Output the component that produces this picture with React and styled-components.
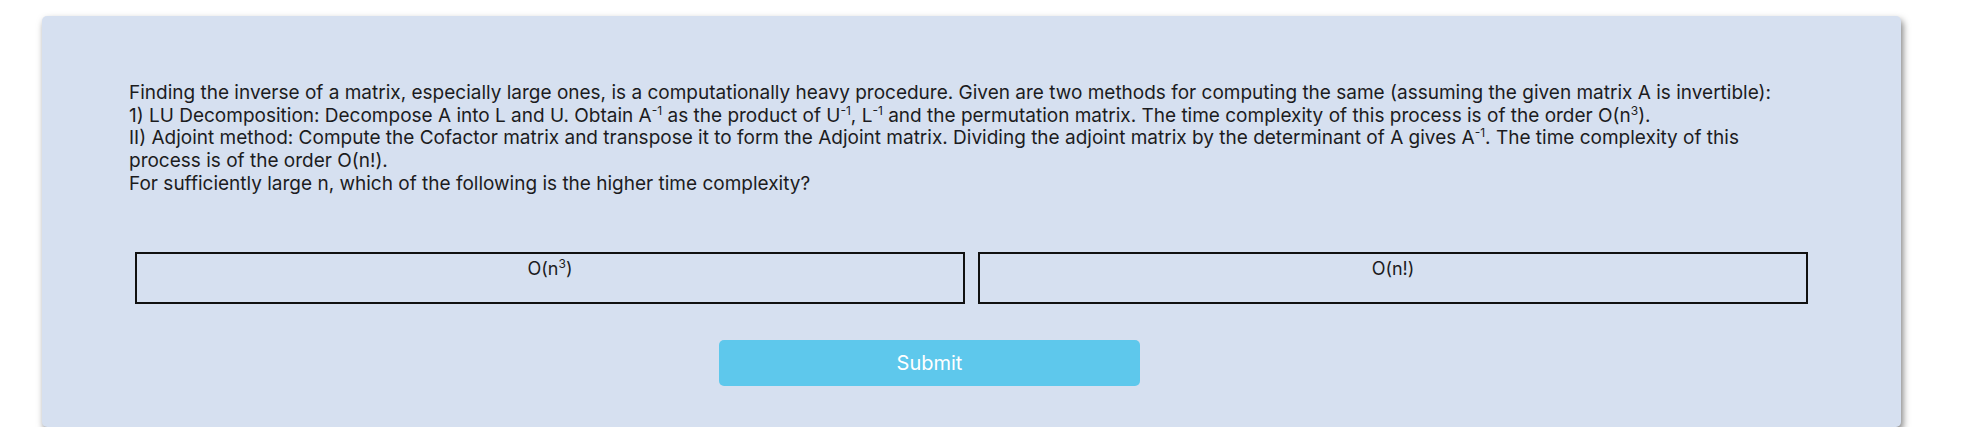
import React from 'react'
import styled, { createGlobalStyle } from 'styled-components'

const GlobalStyle = createGlobalStyle`
	html, body {
		margin: 0;
		padding: 0;
		background-color: #ffffff;
	}
	body {
		font-family: Inter, 'Noto Sans', 'Liberation Sans', sans-serif;
		color: #1c1c1e;
	}
`

const StyledCard = styled.div`
	box-sizing: border-box;
	margin: 16px 63px 0 42px;
	height: 411px;
	padding: 66px 87px 0 87px;
	background-color: #d6e0f0;
	border-radius: 5px;
	box-shadow: 2px 4px 7px rgba(0, 0, 0, 0.5);
`

const StyledQuestion = styled.p`
	margin: 0;
	font-size: 19px;
	line-height: 22.7px;
	sup {
		font-size: 12px;
		line-height: 0;
		vertical-align: 7px;
	}
`

const StyledOptions = styled.div`
	display: grid;
	grid-template-columns: 1fr 1fr;
	gap: 13px;
	margin: 56px 6px 0 6px;
`

const StyledOption = styled.button`
	box-sizing: border-box;
	height: 52px;
	padding: 5px 0 0;
	display: flex;
	justify-content: center;
	align-items: flex-start;
	background-color: transparent;
	border: 2px solid #111111;
	font-family: Inter, 'Noto Sans', 'Liberation Sans', sans-serif;
	font-size: 18px;
	line-height: 20px;
	color: #1c1c1e;
	cursor: pointer;
	sup {
		font-size: 12px;
		line-height: 0;
		vertical-align: 7px;
	}
`

const StyledSubmit = styled.button`
	display: block;
	box-sizing: border-box;
	width: 421px;
	height: 46px;
	margin: 36px 0 0 590px;
	border: none;
	border-radius: 5px;
	background-color: #5ec8ec;
	color: #ffffff;
	font-family: Inter, 'Noto Sans', 'Liberation Sans', sans-serif;
	font-size: 20px;
	cursor: pointer;
`

const App = () => {
	return (
		<>
			<GlobalStyle />
			<StyledCard>
				<StyledQuestion>
					Finding the inverse of a matrix, especially large ones, is a computationally heavy procedure. Given are two methods for computing the same (assuming the given matrix A is invertible):
					<br />
					1) LU Decomposition: Decompose A into L and U. Obtain A<sup>-1</sup> as the product of U<sup>-1</sup>, L<sup>-1</sup> and the permutation matrix. The time complexity of this process is of the order O(n<sup>3</sup>).
					<br />
					II) Adjoint method: Compute the Cofactor matrix and transpose it to form the Adjoint matrix. Dividing the adjoint matrix by the determinant of A gives A<sup>-1</sup>. The time complexity of this process is of the order O(n!).
					<br />
					For sufficiently large n, which of the following is the higher time complexity?
				</StyledQuestion>
				<StyledOptions>
					<StyledOption>
						<span>O(n<sup>3</sup>)</span>
					</StyledOption>
					<StyledOption>
						<span>O(n!)</span>
					</StyledOption>
				</StyledOptions>
				<StyledSubmit>Submit</StyledSubmit>
			</StyledCard>
		</>
	)
}

export default App
